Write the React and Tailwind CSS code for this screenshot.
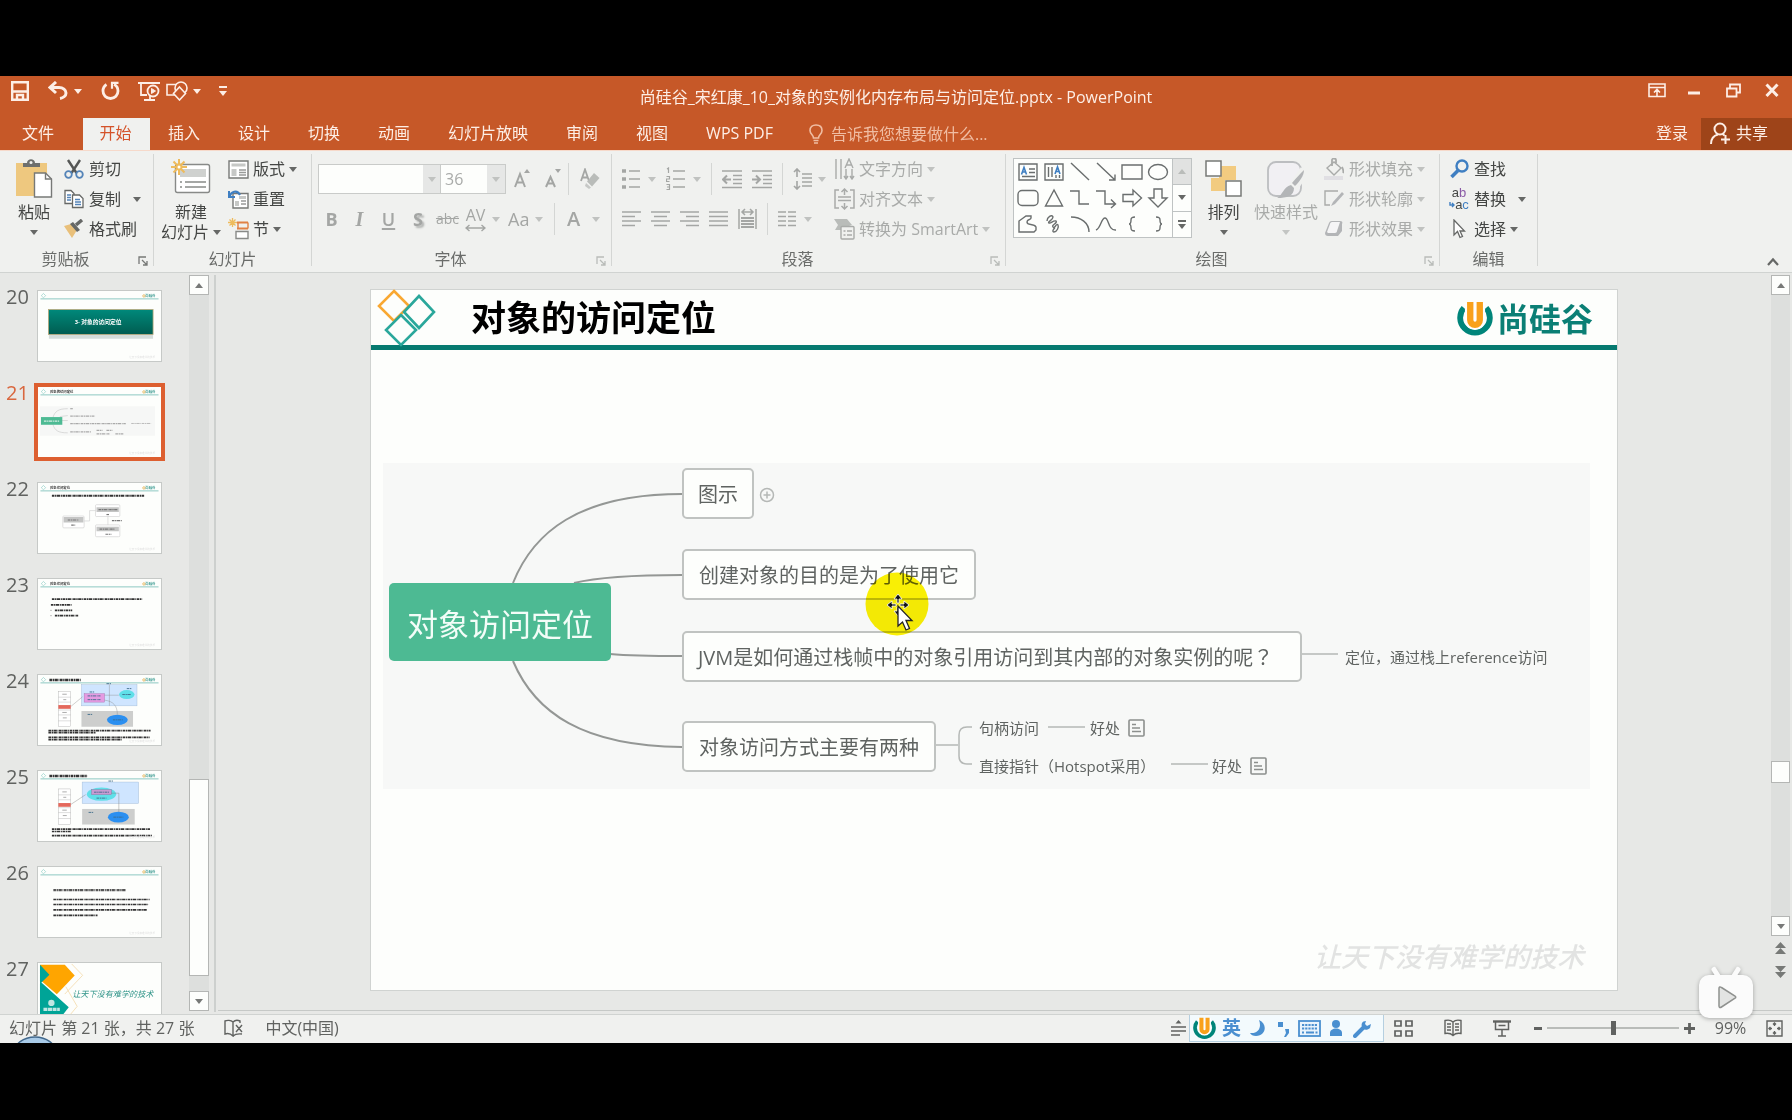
import React from "react";

function Icon({ w, h, children, className = "", sw = 1.4 }) {
  return (
    <svg
      width={w}
      height={h}
      viewBox={`0 0 ${w} ${h}`}
      fill="none"
      stroke="currentColor"
      strokeWidth={sw}
      className={`shrink-0 ${className}`}
      aria-hidden="true"
    >
      {children}
    </svg>
  );
}

function Caret({ className = "" }) {
  return (
    <svg width="8" height="5" viewBox="0 0 8 5" className={`shrink-0 ${className}`} aria-hidden="true">
      <path d="M0 0h8L4 5z" fill="currentColor" />
    </svg>
  );
}

function Sep() {
  return <div className="h-8 w-px bg-[#d4d6d4]" />;
}

/* Full-width punctuation centred in its square */
function Mark({ children }) {
  return <span className="font-['Noto_Sans_CJK_TC',sans-serif]">{children}</span>;
}

/* ---------- title bar ---------- */

function TitleBar() {
  return (
    <header className="grid h-[42px] grid-cols-[1fr_auto_1fr] text-[#fdeee6]">
      <div className="flex items-start pt-[5px] pl-[11px]">
        <button aria-label="保存">
          <Icon w={18} h={20} sw={2.4}>
            <path d="M1.2 1.2h15.6v17.6H1.2zM2 10.5h14" />
            <path d="M6 19v-5h6v5" />
          </Icon>
        </button>
        <button aria-label="撤消" className="ml-[19px] flex items-center gap-[6px]">
          <Icon w={20} h={20} sw={3}>
            <path d="M8 1L2 6.500l6 5.500M3 6.500h8c4 0 7 2.500 7 5.500s-3 5-6 5.500" />
          </Icon>
          <Caret />
        </button>
        <button aria-label="重复" className="ml-[19px]">
          <Icon w={19} h={20} sw={2.8}>
            <path d="M5.500 3.500C3 5 2 7.500 2 10c0 4 3 7.500 7.500 7.500S17 14 17 10c0-3-1.500-5.500-4-6.500" />
            <path d="M17.500 1.800H11v6" strokeWidth="2.200" />
          </Icon>
        </button>
        <button aria-label="从头开始" className="ml-[18px]">
          <Icon w={23} h={20} sw={1.8}>
            <path d="M0 2h22M3 3v11h6M12 15v4M6 19h11" />
            <circle cx="15" cy="10" r="5.500" />
            <path d="M13.500 7.500l4 2.500-4 2.500z" fill="currentColor" strokeWidth="1" />
          </Icon>
        </button>
        <button aria-label="形状" className="ml-[5px] flex items-center gap-[4px]">
          <Icon w={23} h={20} sw={1.6}>
            <path d="M1 3.500h12V14H1z" />
            <circle cx="15" cy="7" r="6" fill="#c65828" />
            <path d="M13.500 6l6 6.500-6 6.500-6-6.500z" fill="#c65828" />
          </Icon>
          <Caret />
        </button>
        <button aria-label="自定义快速访问工具栏" className="ml-[18px] flex h-5 flex-col items-center justify-center gap-[3px]">
          <span className="h-[2px] w-2 bg-[#fdeee6]" />
          <Caret />
        </button>
      </div>
      <h1 className="text-base leading-[42px]">尚硅谷_宋红康_10_对象的实例化内存布局与访问定位.pptx - PowerPoint</h1>
      <div className="flex items-start justify-end pt-[7px] pr-[13px]">
        <button aria-label="功能区显示选项">
          <Icon w={18} h={15} sw={1.6}>
            <path d="M1 1h16v12.500H1zM1 4.500h16M9 13V7M6 9.500l3-3 3 3" />
          </Icon>
        </button>
        <button aria-label="最小化" className="ml-[22px]">
          <Icon w={13} h={15} sw={3}>
            <path d="M0 10h12" />
          </Icon>
        </button>
        <button aria-label="向下还原" className="ml-[25px]">
          <Icon w={15} h={15} sw={1.8}>
            <path d="M1 5.500h9.500v8H1zM4 5V1.500h10v8h-3" />
          </Icon>
        </button>
        <button aria-label="关闭" className="ml-[24px]">
          <Icon w={14} h={15} sw={3}>
            <path d="M1.500 1.500l11 11.500M12.500 1.500l-11 11.500" />
          </Icon>
        </button>
      </div>
    </header>
  );
}

const tabs = ["插入", "设计", "切换", "动画", "幻灯片放映", "审阅", "视图", "WPS PDF"];

function TabRow() {
  return (
    <nav className="flex h-8 items-stretch text-base leading-7 text-[#fdeee6]">
      <button className="w-[83px] pr-[7px] pb-0.5">文件</button>
      <button className="w-[67px] bg-[#f0f1ef] pr-0.5 pb-0.5 text-[#d4532a]">开始</button>
      {tabs.map((t) => (
        <button key={t} className="pr-5 pb-0.5 pl-[18px]">
          {t}
        </button>
      ))}
      <button className="ml-4 flex items-center gap-2 text-[#f0bda3]">
        <Icon w={14} h={20} sw={1.6}>
          <path d="M4.500 14c0-3-3.500-4-3.500-7.500C1 3 3.500 1 7 1s6 2 6 5.500C13 10 9.500 11 9.500 14zM4.500 16.500h5M5 19h4" />
        </Icon>
        告诉我您想要做什么...
      </button>
      <div className="flex-1" />
      <button className="pr-[13px] pb-0.5">登录</button>
      <button className="flex w-[91px] items-center gap-1 bg-[#9e4419] pb-0.5 pl-[9px]">
        <Icon w={22} h={23} sw={2}>
          <circle cx="10" cy="7" r="5.500" />
          <path d="M1 22c0-5 3-8.500 7-9.500M12.500 12l2 1.500M15.500 13v9M11 17.500h9" />
        </Icon>
        共享
      </button>
    </nav>
  );
}

/* ---------- ribbon ---------- */

function Group({ label, launcher, launcherTone = "text-[#b9bcb9]", children }) {
  return (
    <section className="flex">
      <div>
        <div className="flex h-[90px]">{children}</div>
        <div className="flex h-[28px] items-center pt-0.5">
          <div className="flex-1 text-center text-base leading-5 text-[#6a6c6a]">{label}</div>
          {launcher && (
            <button aria-label={`${label}设置`} className={`w-[22px] pt-1 pl-[7px] ${launcherTone}`}>
              <Icon w={10} h={10} sw={1.3}>
                <path d="M1 8V1h7M4 4l5 5M9 5v4H5" />
              </Icon>
            </button>
          )}
        </div>
      </div>
      <div className="mb-1.5 w-px bg-[#d4d6d4]" />
    </section>
  );
}

function Row({ icon, label, caret, far, off }) {
  return (
    <button className={`flex h-[30px] items-center text-base leading-5 whitespace-nowrap ${off ? "text-[#a9aba9]" : "text-[#444644]"}`}>
      <span className="mr-[5px] flex w-5 justify-center">{icon}</span>
      {label}
      {caret && <Caret className={`${far ? "ml-3" : "ml-1"} ${off ? "text-[#c0c2c0]" : "text-[#666866]"}`} />}
    </button>
  );
}

function Big({ icon, line1, line2, caret = true, off, className = "" }) {
  return (
    <button className={`flex flex-col items-center pt-1 text-base leading-5 whitespace-nowrap ${off ? "text-[#a9aba9]" : "text-[#444644]"} ${className}`}>
      <span className="flex h-[44px] items-start">{icon}</span>
      <span>{line1}</span>
      <span className="flex h-5 items-center gap-1">
        {line2}
        {caret && <Caret className={off ? "text-[#c3c5c3]" : "text-[#666866]"} />}
      </span>
    </button>
  );
}

function Sun({ x = 8, y = 8 }) {
  return (
    <g stroke="#eebb5c" strokeWidth="2" transform={`translate(${x} ${y})`}>
      <path d="M0-8v5M0 8v-5M-8 0h5M8 0h-5M-5.500-5.500l3.200 3.200M5.500-5.500L2.300-2.300M-5.500 5.500l3.200-3.200M5.500 5.500L2.300 2.300" />
      <circle r="2.500" fill="#fff" />
    </g>
  );
}

function Clipboard() {
  return (
    <Group label="剪贴板" launcher launcherTone="text-[#777977]">
      <Big
        className="ml-[13px] w-[42px]"
        line1="粘贴"
        icon={
          <Icon w={38} h={42}>
            <path d="M1 5h31v33H1z" fill="#eec87f" stroke="none" />
            <path d="M8 9V5h4c0-5 8-5 8 0h5v4z" fill="#6d6f6d" stroke="none" />
            <circle cx="16" cy="4.500" r="1.500" fill="#f0f1ef" stroke="none" />
            <path d="M19.500 15h11l6 6v18h-17z" fill="#fff" stroke="#777977" />
            <path d="M30.500 15v6h6" stroke="#777977" />
          </Icon>
        }
      />
      <div className="ml-[9px] w-[89px]">
        <Row
          label="剪切"
          icon={
            <Icon w={20} h={20} sw={1.8}>
              <path d="M4 1l8.500 13M16 1L7.500 14" stroke="#555755" strokeWidth="2.400" />
              <circle cx="4.500" cy="15.500" r="3.300" stroke="#5484b8" />
              <circle cx="15.500" cy="15.500" r="3.300" stroke="#5484b8" />
            </Icon>
          }
        />
        <Row
          label="复制"
          caret
          far
          icon={
            <Icon w={20} h={20} sw={1.3}>
              <path d="M1 1.500h6l3 3v10H1z" fill="#fff" stroke="#666866" />
              <path d="M3 6h4M3 8.500h4M3 11h4" stroke="#5484b8" />
              <path d="M8.500 6h7l3.500 3.500v9H8.500z" fill="#fff" stroke="#666866" />
              <path d="M11 10.500h5M11 13h6M11 15.500h6" stroke="#5484b8" />
            </Icon>
          }
        />
        <Row
          label="格式刷"
          icon={
            <Icon w={20} h={20}>
              <path d="M0 7l7-2 6 6-5 8z" fill="#e9c07a" stroke="none" />
              <path d="M6 5l3-2 7 8-3 2z" fill="#666866" stroke="none" />
              <path d="M12 6l6-5" stroke="#666866" strokeWidth="3.500" />
            </Icon>
          }
        />
      </div>
    </Group>
  );
}

function Slides() {
  return (
    <Group label="幻灯片">
      <Big
        className="ml-[7px] w-[60px]"
        line1="新建"
        line2="幻灯片"
        icon={
          <Icon w={40} h={38}>
            <rect x="4.500" y="6.500" width="34" height="28" rx="2" fill="#fff" stroke="#888a88" />
            <path d="M9 11h26v8H9z" fill="#cfd1cf" stroke="none" />
            <path d="M9 24h2M14 24h21M9 29h2M14 29h21" stroke="#888a88" />
            <Sun x={8} y={9} />
          </Icon>
        }
      />
      <div className="ml-[7px] w-[83px]">
        <Row
          label="版式"
          caret
          icon={
            <Icon w={21} h={19}>
              <path d="M1 1h19v17H1z" fill="#fff" stroke="#777977" />
              <path d="M3.500 3.500h14v3h-14zM3.500 9h5v7h-5z" fill="#c6c8c6" stroke="none" />
              <path d="M11 10h7M11 12.500h7M11 15h7" stroke="#999b99" />
            </Icon>
          }
        />
        <Row
          label="重置"
          icon={
            <Icon w={21} h={20}>
              <path d="M5 4.500h15V19H5z" fill="#fff" stroke="#777977" />
              <path d="M11 7h7v3h-7zM7 12h4v5H7z" fill="#c6c8c6" stroke="none" />
              <path d="M13 12h5M13 15h5" stroke="#999b99" />
              <path d="M1 2v6h6M1.500 7.500C3 3 9 0 12 6" stroke="#3f7fc2" strokeWidth="2" />
            </Icon>
          }
        />
        <Row
          label="节"
          caret
          icon={
            <Icon w={21} h={22}>
              <path d="M9 4.500h11M9 10.500h11" stroke="#e08145" strokeWidth="1.800" />
              <path d="M8 13.500h12v7H8z" fill="#fff" stroke="#888a88" />
              <path d="M10 4.500v6M20 4.500v6" stroke="#e08145" />
              <g stroke="#eebb5c" strokeWidth="1.300">
                <path d="M4.500 0v9M0 4.500h9M1.500 1.500l6 6M7.500 1.500l-6 6" />
              </g>
            </Icon>
          }
        />
      </div>
    </Group>
  );
}

const paleCaret = "text-[#c0c2c0]";

function FontGroup() {
  return (
    <Group label="字体" launcher>
      <div className="w-[299px] pt-[10px] pl-1.5 text-[#a4a6a4]">
        <div className="flex h-[30px] items-center">
          <div className="flex h-[30px] w-[123px] border border-[#c9cbc9] bg-[#fdfefc]">
            <input aria-label="字体" className="w-0 flex-1 px-1 outline-none" />
            <button aria-label="字体列表" className="flex w-[17px] items-center justify-center bg-[#e6e7e6]">
              <Caret className={paleCaret} />
            </button>
          </div>
          <div className="flex h-[30px] w-[65px] border border-l-0 border-[#c9cbc9] bg-[#fdfefc]">
            <input aria-label="字号" defaultValue="36" className="w-0 flex-1 px-1 text-base text-[#a9aba9] outline-none" />
            <button aria-label="字号列表" className="flex w-[18px] items-center justify-center bg-[#e6e7e6]">
              <Caret className={paleCaret} />
            </button>
          </div>
          <button aria-label="增大字号" className="flex w-8 justify-center">
            <Icon w={17} h={20} sw={2}>
              <path d="M1 18L6 5l5 13M2.500 13.500h7" />
              <path d="M10 4l3-4 3 4z" fill="currentColor" stroke="none" />
            </Icon>
          </button>
          <button aria-label="减小字号" className="flex w-[30px] justify-center">
            <Icon w={17} h={20} sw={2}>
              <path d="M1 18L5.500 8l4.500 10M2.500 14.500h6" />
              <path d="M10 0l3 4 3-4z" fill="currentColor" stroke="none" />
            </Icon>
          </button>
          <Sep />
          <button aria-label="清除所有格式" className="flex w-10 justify-center pl-0.5">
            <Icon w={20} h={22} sw={1.8}>
              <path d="M1 13L5 1.500 9 13M2.500 9.500h5" />
              <path d="M7 13.500L14 5l5.500 5-7.500 8.500z" fill="#b9bcb9" stroke="none" />
              <path d="M6 15l5 4.500-2 1.500-4-3z" fill="#c6c8c6" stroke="none" />
            </Icon>
          </button>
        </div>
        <div className="mt-[10px] flex h-[30px] items-center text-lg leading-6">
          <button aria-label="加粗" className="w-[27px] font-bold">B</button>
          <button aria-label="倾斜" className="w-[29px] font-['Liberation_Serif',serif] text-xl font-bold italic">I</button>
          <button aria-label="下划线" className="w-[29px] font-semibold underline decoration-2 underline-offset-2">U</button>
          <button aria-label="文字阴影" className="w-[30px] font-bold [text-shadow:2px_2px_2px_#b0b2b0]">S</button>
          <button aria-label="删除线" className="w-[29px] text-sm line-through">abc</button>
          <button aria-label="字符间距" className="ml-[3px] flex w-[43px] items-center gap-1.5">
            <span className="flex flex-col items-center text-base leading-[18px]">
              AV
              <Icon w={21} h={8} sw={1.400}>
                <path d="M1 4h19M4.500 1L1 4l3.500 3M16.500 1L20 4l-3.500 3" />
              </Icon>
            </span>
            <Caret className={paleCaret} />
          </button>
          <button aria-label="更改大小写" className="flex w-[46px] items-center gap-1.5">
            Aa
            <Caret className={paleCaret} />
          </button>
          <Sep />
          <button aria-label="字体颜色" className="flex items-center gap-3 pl-3 text-xl font-semibold">
            A
            <Caret className={paleCaret} />
          </button>
        </div>
      </div>
    </Group>
  );
}

function Lines({ rows, w = 19 }) {
  return (
    <Icon w={w} h={18} sw={1.500}>
      {rows.map(([a, b], i) => (
        <path key={i} d={`M${a} ${2 + i * 4.5}H${b}`} />
      ))}
    </Icon>
  );
}

function Paragraph() {
  return (
    <Group label="段落" launcher>
      <div className="w-[222px] pt-[10px] pl-[10px] text-[#a4a6a4]">
        <div className="flex h-[30px] items-center gap-[10px]">
          <button aria-label="项目符号" className="flex items-center gap-2">
            <Icon w={18} h={22} sw={1.500}>
              <path d="M0 3h4M0 11h4M0 19h4" strokeWidth="3.500" />
              <path d="M7 3h11M7 11h11M7 19h11" />
            </Icon>
            <Caret className={paleCaret} />
          </button>
          <button aria-label="编号" className="flex items-center gap-2">
            <Icon w={19} h={24} sw={1.500}>
              <path d="M7 4h12M7 12h12M7 20h12" />
              <path d="M1 2l1.500-1v5M0.500 9.500h3v2.500h-3v2.500h3M0.500 17.500h3v2.500H1M3.500 20v2.500h-3" strokeWidth="1.200" />
            </Icon>
            <Caret className={paleCaret} />
          </button>
          <Sep />
          <button aria-label="降低列表级别">
            <Icon w={20} h={20} sw={1.600}>
              <path d="M0 2h20M11 6.500h9M11 10.500h9M11 14.500h9M0 18.500h20" />
              <path d="M1 10.500h8M5 6.500l-4 4 4 4" strokeWidth="2" />
            </Icon>
          </button>
          <button aria-label="提高列表级别">
            <Icon w={20} h={20} sw={1.600}>
              <path d="M0 2h20M11 6.500h9M11 10.500h9M11 14.500h9M0 18.500h20" />
              <path d="M0 10.500h8M4 6.500l4 4-4 4" strokeWidth="2" />
            </Icon>
          </button>
          <Sep />
          <button aria-label="行距" className="flex items-center gap-1.5">
            <Icon w={19} h={22} sw={1.600}>
              <path d="M9 6h10M9 10h10M9 14h10M9 18h10" />
              <path d="M4 1v8M1 4l3-3 3 3M4 21v-8M1 18l3 3 3-3" />
            </Icon>
            <Caret className={paleCaret} />
          </button>
        </div>
        <div className="mt-[10px] flex h-[30px] items-center gap-[10px]">
          <button aria-label="左对齐"><Lines rows={[[0, 19], [0, 13], [0, 19], [0, 13]]} /></button>
          <button aria-label="居中"><Lines rows={[[0, 19], [3, 16], [0, 19], [3, 16]]} /></button>
          <button aria-label="右对齐"><Lines rows={[[0, 19], [6, 19], [0, 19], [6, 19]]} /></button>
          <button aria-label="两端对齐"><Lines rows={[[0, 19], [0, 19], [0, 19], [0, 19]]} /></button>
          <button aria-label="分散对齐">
            <Icon w={19} h={22} sw={1.500}>
              <path d="M1 1v20M18 1v20" />
              <path d="M4 4h11M7 1L4 4l3 3M12 1l3 3-3 3" />
              <path d="M3 10h13M3 13h13M3 16h13M3 19h13" strokeWidth="1.800" />
            </Icon>
          </button>
          <Sep />
          <button aria-label="分栏" className="flex items-center gap-2">
            <Icon w={18} h={18} sw={1.500}>
              <path d="M0 2h8M0 6.500h8M0 11h8M0 15.500h8M10 2h8M10 6.500h8M10 11h8M10 15.500h8" />
            </Icon>
            <Caret className={paleCaret} />
          </button>
        </div>
      </div>
      <div className="w-[171px]">
        <Row
          off
          caret
          label="文字方向"
          icon={
            <Icon w={21} h={22} sw={1.400}>
              <path d="M2 1v20M7 1v20M12 11v10M18 11v10M11 10l4-9 4 9M12.500 7h5M10 18l2 3 2-3M16 18l2 3 2-3" />
            </Icon>
          }
        />
        <Row
          off
          caret
          label="对齐文本"
          icon={
            <Icon w={21} h={22} sw={1.500}>
              <path d="M5 2H1v18h4M16 2h4v18h-4M10.500 1v6M7.500 4l3-3 3 3M10.500 21v-6M7.500 18l3 3 3-3M4 9h13M4 12.500h13" />
            </Icon>
          }
        />
        <Row
          off
          caret
          label="转换为 SmartArt"
          icon={
            <Icon w={21} h={22} sw={1.400}>
              <path d="M0 1h13l5 6-3 1H8v4H1l3-5z" fill="#b9bcb9" stroke="none" />
              <rect x="7" y="8.500" width="13" height="12.500" rx="1" fill="#f0f1ef" />
              <path d="M9.500 13h2M13 13h5M9.500 17h2M13 17h5" />
            </Icon>
          }
        />
      </div>
    </Group>
  );
}

const shapes = [
  ["文本框", <><path d="M1 2h18v16H1z" /><path d="M3.500 12.500L6 5.500l2.500 7M4.500 10h3" stroke="#3f7fc2" strokeWidth="1.600" /><path d="M11 7h6M11 10.500h6M4 14.500h13" /></>],
  ["竖排文本框", <><path d="M1 2h18v16H1z" /><path d="M4.500 5v10M8 5v10" /><path d="M11 12l2.500-7 2.500 7M12 9.500h3" stroke="#3f7fc2" strokeWidth="1.600" /><path d="M12 13v3M15.500 13v3" /></>],
  ["直线", <path d="M1 1l18 17" />],
  ["箭头", <path d="M1 1l18 17M19 12.500V18h-6" />],
  ["矩形", <path d="M0 3h20v14H0z" />],
  ["椭圆", <ellipse cx="10" cy="10" rx="9.500" ry="7.500" />],
  ["圆角矩形", <rect x="0" y="2.500" width="20" height="15" rx="4" />],
  ["三角形", <path d="M10 2L1.500 18h17z" />],
  ["肘形连接符", <path d="M0 3h9v13h10" />],
  ["肘形箭头", <path d="M0 3h9v13h10M15 11.500l4.500 4.500-4.500 4" />],
  ["右箭头", <path d="M1 6.500h10V2l8.500 8-8.500 8v-4.500H1z" />],
  ["下箭头", <path d="M6 1v9H1l9 9 9-9h-5V1z" />],
  ["任意多边形", <path d="M1 18V7l7-5h5v2c0 2-4 1-4 4 0 4 7 1 9 5v3l-2 2z" />],
  ["自由曲线", <path d="M3 7c0-4 5-7 6-4 0 3-6 5-4 6s4-3 7-2c2 2-5 4-3 6s3-4 5-2c1 2-1 7-4 7-2 0-1-3 1-4" />],
  ["弧形", <path d="M1 3c10 0 18 6 18 15" />],
  ["曲线", <path d="M0 16c5-2 5-12 9-12s3 13 11 12" />],
  ["左大括号", <path d="M13 3c-3 0-4 .500-4 3 0 2.500 0 4-2 4 2 0 2 1.500 2 4 0 2.500 1 3 4 3" />],
  ["右大括号", <path d="M8 3c3 0 4 .500 4 3 0 2.500 0 4 2 4-2 0-2 1.500-2 4 0 2.500-1 3-4 3" />],
];

function Drawing() {
  return (
    <Group label="绘图" launcher>
      <div className="mt-1 ml-[7px] flex h-20 border border-[#bfc3c3]">
        <div className="grid grid-cols-6 bg-[#fdfefc] px-px text-[#6a6e6e]">
          {shapes.map(([name, d]) => (
            <button key={name} aria-label={name} className="flex h-[26px] w-[26px] items-center justify-center">
              <Icon w={20} h={20} sw={1.400} className="overflow-visible">
                {d}
              </Icon>
            </button>
          ))}
        </div>
        <div className="flex w-[19px] flex-col border-l border-[#bfc3c3] text-[#666866]">
          <button aria-label="上一行" className="flex flex-1 items-center justify-center bg-[#e1e2e1] text-[#b9bcb9]">
            <Caret className="rotate-180" />
          </button>
          <button aria-label="下一行" className="flex flex-1 items-center justify-center border-y border-[#bfc3c3] bg-[#fdfefc]">
            <Caret />
          </button>
          <button aria-label="其他形状" className="flex flex-1 flex-col items-center justify-center gap-0.5 bg-[#fdfefc]">
            <span className="h-[2px] w-2 bg-[#666866]" />
            <Caret />
          </button>
        </div>
      </div>
      <Big
        className="w-[63px]"
        line1="排列"
        icon={
          <Icon w={37} h={40} sw={1.500}>
            <path d="M14 8h17v14H14zM6 20h14v13H6z" fill="#f2cb80" stroke="none" />
            <path d="M1 3h15v15H1zM21 23h15v15H21z" fill="#fff" stroke="#777977" />
          </Icon>
        }
      />
      <Big
        className="w-[62px]"
        off
        line1="快速样式"
        icon={
          <Icon w={40} h={42} sw={1.800}>
            <rect x="2" y="4" width="33" height="34" rx="8" fill="#f1f0f3" stroke="#bcbec0" />
            <path d="M39 12L27 30" stroke="#f0f1ef" strokeWidth="10" />
            <path d="M38 12c0 6-5 12-9 16l-3-3c4-5 8-9 12-13z" fill="#b3b5b7" stroke="none" />
            <path d="M25 27l3 3c0 8-7 10-17 10 6-3 6-11 14-13z" fill="#b3b5b7" stroke="none" />
          </Icon>
        }
      />
      <div className="ml-[7px] w-[115px]">
        <Row
          off
          caret
          label="形状填充"
          icon={
            <Icon w={20} h={22} sw={1.400}>
              <path d="M3 10l7-6 7 6-7 7z" />
              <path d="M8 8V2c0-2 4-2 4 0v3M18 9c1 2 2 4 1 6" strokeWidth="1.800" />
              <path d="M0 18h19v4H0z" fill="#e0dfe3" stroke="none" />
            </Icon>
          }
        />
        <Row
          off
          caret
          label="形状轮廓"
          icon={
            <Icon w={20} h={20} sw={1.400}>
              <path d="M14 2H1v14h5" />
              <path d="M18 3l-9 10-2 4 4-2 9-10z" fill="#b3b5b7" stroke="none" />
            </Icon>
          }
        />
        <Row
          off
          caret
          label="形状效果"
          icon={
            <Icon w={20} h={20} sw={1.400}>
              <path d="M1 14l4-10c1-2 2-2 4-2h7c2 0 3 1 2 3v7l-4 5H4c-2 0-3-1-3-3z" fill="#b3b5b7" stroke="none" />
              <path d="M3 13l3-8c0-1 1-2 2-2h8l-3 9c0 1-1 2-2 2H4z" fill="#f5f5f6" stroke="none" />
            </Icon>
          }
        />
      </div>
    </Group>
  );
}

function Editing() {
  return (
    <Group label="编辑">
      <div className="w-[97px] pl-[9px]">
        <Row
          label="查找"
          icon={
            <Icon w={19} h={20} sw={2.400}>
              <circle cx="12" cy="7" r="5.500" stroke="#3f7fc2" />
              <path d="M8 11.500L1.500 18" stroke="#3f7fc2" strokeWidth="3.500" />
            </Icon>
          }
        />
        <Row
          label="替换"
          caret
          far
          icon={
            <span className="flex flex-col font-['Liberation_Sans',sans-serif] text-[13px] leading-3">
              <span>
                a<span className="text-[#8a5ba6]">b</span>
              </span>
              <span className="flex items-center">
                <Icon w={6} h={6} sw={1.400}>
                  <path d="M1 0v3h4M3 1l2 2-2 2" stroke="#3f7fc2" />
                </Icon>
                a<span className="text-[#3f7fc2]">c</span>
              </span>
            </span>
          }
        />
        <Row
          label="选择"
          caret
          icon={
            <Icon w={14} h={20} sw={1.300}>
              <path d="M2 1v15l3.500-3.500L8 18.500l2.500-1L8 12h4.500z" fill="#fff" stroke="#666866" />
            </Icon>
          }
        />
      </div>
    </Group>
  );
}

function Ribbon() {
  return (
    <div className="flex border-b border-[#d0d3d1] bg-[#f0f1ef] pt-1 shadow-[inset_0_1px_0_#f6d9ca]">
      <Clipboard />
      <Slides />
      <FontGroup />
      <Paragraph />
      <Drawing />
      <Editing />
      <div className="flex flex-1 items-end justify-end pr-[13px] pb-[5px] text-[#666866]">
        <button aria-label="折叠功能区">
          <Icon w={12} h={10} sw={2.200}>
            <path d="M1 8l5-5.500L11 8" />
          </Icon>
        </button>
      </div>
    </div>
  );
}

/* ---------- thumbnails ---------- */

function ThumbFrame({ title, children }) {
  return (
    <>
      <path d="M55 25l22 22-22 22-22-22z" fill="none" stroke="#7fc7bf" strokeWidth="6" />
      {title && (
        <text x="120" y="62" fontSize="34" fontWeight="700" fill="#333">
          {title}
        </text>
      )}
      <text x="1082" y="62" fontSize="34" fontWeight="700" fill="#3f9c93">
        尚硅谷
      </text>
      <circle cx="1068" cy="50" r="12" fill="none" stroke="#e5b04f" strokeWidth="8" />
      <path d="M25 80h1190" stroke="#8cc7c1" strokeWidth="10" />
      {children}
      <text x="920" y="675" fontSize="26" fill="#e2e2e2">
        让天下没有难学的技术
      </text>
    </>
  );
}

/* Rows of body copy too small to read, drawn as broken strokes */
function Copy({ rows, color = "#333", w = 13 }) {
  return rows.map(([x, y, len], i) => (
    <path key={i} d={`M${x} ${y}h${len}`} stroke={color} strokeWidth={w} strokeDasharray="26 6 14 5 34 7 9 6" />
  ));
}

function Stack({ y, red }) {
  return (
    <g stroke="#aaa" strokeWidth="4" fill="#fff">
      <rect x="205" y={y} width="125" height="360" />
      {[60, 110, 190, 240, 300].map((d) => (
        <path key={d} d={`M205 ${y + d}h125`} />
      ))}
      <rect x="205" y={red} width="125" height="38" fill="#e4685c" stroke="none" />
      <path d={`M245 ${y + 30}h45M255 ${y + 85}h30M245 ${y + 215}h45M250 ${y + 270}h40`} stroke="#888" strokeWidth="7" />
    </g>
  );
}

const thumbs = [
  {
    n: 20,
    art: (
      <ThumbFrame>
        <defs>
          <linearGradient id="banner" x1="0" y1="0" x2="0" y2="1">
            <stop offset="0" stopColor="#00897b" />
            <stop offset="1" stopColor="#005c50" />
          </linearGradient>
        </defs>
        <path d="M110 445h1050v40H110z" fill="#d5dcda" />
        <rect x="105" y="188" width="1055" height="252" fill="url(#banner)" stroke="#b9a878" strokeWidth="8" />
        <text x="370" y="330" fontSize="58" fontWeight="700" fill="#fff">
          3- 对象的访问定位
        </text>
      </ThumbFrame>
    ),
  },
  {
    n: 21,
    art: (
      <ThumbFrame title="对象的访问定位">
        <path d="M20 195h1160v300H20z" fill="#f6f7f6" />
        <path d="M150 310C170 250 200 220 300 220M150 380C170 440 200 465 300 465M240 340h60M220 300l80-10" fill="none" stroke="#bbb" strokeWidth="5" />
        <rect x="30" y="305" width="215" height="78" fill="#4dba93" />
        <Copy color="#d5ede4" w={14} rows={[[60, 346, 155]]} />
        <Copy color="#aaa" w={12} rows={[[325, 220, 30], [325, 295, 250], [325, 372, 560], [325, 455, 210], [590, 440, 60], [690, 440, 60], [590, 475, 130], [780, 475, 80]]} />
        <Copy color="#bbb" w={10} rows={[[940, 370, 200]]} />
      </ThumbFrame>
    ),
  },
  {
    n: 22,
    art: (
      <ThumbFrame title="对象访问定位">
        <Copy w={20} rows={[[140, 130, 930]]} />
        <g fill="#fff" stroke="#ccc" strokeWidth="6">
          <rect x="250" y="335" width="215" height="120" rx="10" />
          <rect x="580" y="220" width="245" height="120" rx="10" />
          <rect x="580" y="425" width="245" height="120" rx="10" />
          <path d="M465 385h55V280h60M705 340v85" fill="none" />
        </g>
        <path d="M258 345h200v55H258zM590 245h225v50H590zM590 445h225v45H590z" fill="#c4c5c4" />
        <Copy color="#777" w={12} rows={[[300, 375, 110], [610, 270, 190], [620, 467, 150], [335, 428, 40], [690, 320, 30], [680, 520, 60], [745, 382, 100]]} />
      </ThumbFrame>
    ),
  },
  {
    n: 23,
    art: (
      <ThumbFrame title="对象访问定位">
        <Copy w={18} rows={[[140, 205, 910], [130, 262, 210], [170, 318, 175], [170, 372, 235]]} />
        <path d="M125 318h12M125 372h12" stroke="#999" strokeWidth="10" />
      </ThumbFrame>
    ),
  },
  {
    n: 24,
    art: (
      <ThumbFrame>
        <Copy w={26} rows={[[115, 50, 320]]} />
        <Stack y={165} red={305} />
        <rect x="438" y="98" width="560" height="215" fill="#cfe5ff" stroke="#9bb4d0" strokeWidth="4" />
        <rect x="438" y="365" width="520" height="160" fill="#cdcecd" />
        <rect x="465" y="190" width="205" height="85" fill="#e59be2" stroke="#a867a6" strokeWidth="4" />
        <ellipse cx="895" cy="198" rx="78" ry="45" fill="#5fdfe8" />
        <ellipse cx="800" cy="455" rx="105" ry="52" fill="#2b8ff0" />
        <path d="M330 320l120-100M670 205h145M670 255c90 10 130 60 130 145M720 98v215" fill="none" stroke="#888" strokeWidth="4" />
        <Copy color="#3d6b8a" w={9} rows={[[500, 212, 130], [500, 250, 130], [850, 198, 90], [755, 455, 100], [690, 88, 50], [895, 138, 50], [500, 400, 50], [520, 172, 50]]} />
        <Copy w={17} rows={[[105, 565, 1030], [105, 585, 480], [105, 632, 1020], [105, 655, 740]]} />
      </ThumbFrame>
    ),
  },
  {
    n: 25,
    art: (
      <ThumbFrame>
        <Copy w={26} rows={[[115, 50, 380]]} />
        <Stack y={182} red={325} />
        <rect x="445" y="112" width="570" height="218" fill="#cfe5ff" stroke="#9bb4d0" strokeWidth="4" />
        <rect x="445" y="385" width="530" height="158" fill="#cdcecd" />
        <ellipse cx="640" cy="235" rx="148" ry="68" fill="#5fdfe8" />
        <rect x="540" y="190" width="200" height="50" fill="#c99ad2" stroke="#8c6a98" strokeWidth="4" />
        <ellipse cx="810" cy="468" rx="105" ry="55" fill="#2b8ff0" />
        <path d="M330 340l150-100M740 225h75v190" fill="none" stroke="#777" strokeWidth="4" />
        <Copy color="#3d6b8a" w={9} rows={[[565, 215, 150], [590, 275, 100], [760, 468, 100], [710, 102, 50], [510, 420, 50]]} />
        <Copy w={17} rows={[[140, 590, 990], [140, 614, 190], [140, 655, 1010]]} />
      </ThumbFrame>
    ),
  },
  {
    n: 26,
    art: (
      <ThumbFrame>
        <Copy color="#555" w={24} rows={[[155, 235, 730]]} />
        <Copy w={17} rows={[[155, 330, 970], [155, 380, 955], [155, 435, 945], [155, 490, 445]]} />
      </ThumbFrame>
    ),
  },
  {
    n: 27,
    art: (
      <>
        <path d="M340 10l110 115-180 190M280 240l115 200-100 120" fill="none" stroke="#f3d9a8" strokeWidth="8" />
        <path d="M20 18h250l100 110-180 190L20 170z" fill="#ffa500" />
        <path d="M20 18l95 100-95 95zM20 185l290 265-190 240H20z" fill="#00a497" />
        <circle cx="135" cy="405" r="32" fill="#bfe6e2" />
        <path d="M55 470h165" stroke="#bfe6e2" strokeWidth="34" strokeDasharray="40 6" />
        <text x="345" y="345" fontSize="82" fontStyle="italic" fill="#2f9488">
          让天下没有难学的技术
        </text>
      </>
    ),
  },
];

function ScrollBtn({ label, down }) {
  return (
    <button aria-label={label} className="flex h-5 w-full shrink-0 items-center justify-center border border-[#b4b6b4] bg-[#fdfefc] text-[#777977]">
      <Caret className={down ? "" : "rotate-180"} />
    </button>
  );
}

function ThumbPane() {
  return (
    <aside className="flex w-[216px] shrink-0">
      <ol className="min-w-0 flex-1 overflow-hidden pt-[13px]">
        {thumbs.map(({ n, art }) => (
          <li key={n} className="h-24 pl-1.5">
            <button className="flex items-start">
              <span className={`w-[31px] text-left text-xl leading-[22px] ${n === 21 ? "text-[#d9673f]" : "text-[#606260]"}`}>{n}</span>
              <span
                className={`mt-1 block h-[72px] w-[125px] border bg-[#fdfefc] ${n === 21 ? "border-[#dd5f30] ring-3 ring-[#dd5f30]" : "border-[#c6c9c7]"}`}
              >
                <svg viewBox="0 0 1240 710" preserveAspectRatio="none" className="block h-full w-full" aria-hidden="true">
                  {art}
                </svg>
              </span>
            </button>
          </li>
        ))}
      </ol>
      <div className="mt-0.5 mr-[5px] mb-[3px] flex w-5 flex-col bg-[#dddfdd]">
        <ScrollBtn label="向上滚动" />
        <div className="flex-[486]" />
        <div className="flex-[196] border border-[#b4b6b4] bg-[#fdfefc]" />
        <div className="flex-[15]" />
        <ScrollBtn label="向下滚动" down />
      </div>
      <div className="mt-0.5 mb-0.5 w-0.5 bg-[#cdd0ce]" />
    </aside>
  );
}

/* ---------- slide ---------- */

function ULogo({ size }) {
  return (
    <svg width={size} height={size} viewBox="0 0 34 34" className="shrink-0" aria-hidden="true">
      <path d="M6.500 6.500A14 14 0 1 0 27.500 6.500" fill="none" stroke="#00857a" strokeWidth="5.500" />
      <path d="M12 2v16a5 5 0 0 0 10 0V2" fill="none" stroke="#fff" strokeWidth="9" />
      <path d="M12.500 1v17a4.500 4.500 0 0 0 9 0V1" fill="none" stroke="#f9a11b" strokeWidth="6" />
    </svg>
  );
}

function NoteIcon() {
  return (
    <Icon w={17} h={18} sw={1.600} className="text-[#8c8f8d]">
      <rect x="1" y="1" width="15" height="16" rx="1" />
      <path d="M4 5.500h4M4 9h8M4 12.500h9" />
    </Icon>
  );
}

const nodeBox = "absolute left-[299px] flex h-[51px] items-center rounded-[5px] border-2 border-[#c0c3c1] bg-[#fdfefc] text-xl leading-6 whitespace-nowrap text-[#5f6361]";
const leaf = "absolute flex h-6 items-center text-[15px] leading-6 whitespace-nowrap text-[#5f6361]";

function MindMap() {
  return (
    <div className="relative mt-[113px] mr-[27px] ml-[12px] h-[326px] bg-[#f7f8f7]">
      <svg width="1206" height="326" viewBox="0 0 1206 326" fill="none" stroke="#949795" strokeWidth="2" className="absolute top-0 left-0" aria-hidden="true">
        <path d="M130 120C150 70 195 31 299 31M191 120C220 113 260 112 299 112M227 191C250 193 270 193 299 193M130 198C152 250 200 283 299 284" />
        <g stroke="#b5b8b6" strokeWidth="1.500">
          <path d="M553 282h22M589 264h-5q-8 0-8 8v21q0 8 8 8h5M919 191h36M665 264h37M788 301h37" />
          <circle cx="384" cy="32" r="6.500" />
          <path d="M380.500 32h7M384 28.500v7" />
        </g>
      </svg>
      <div className="absolute top-[120px] left-[6px] flex h-[78px] w-[222px] items-center justify-center rounded-[5px] bg-[#4dba93] pt-1 text-[31px] leading-10 whitespace-nowrap text-[#f3fdf8]">
        对象访问定位
      </div>
      <div className={`${nodeBox} top-[5px] w-[72px] justify-center pt-0.5`}>图示</div>
      <div className={`${nodeBox} top-[86px] w-[294px] justify-center pt-0.5`}>创建对象的目的是为了使用它</div>
      <div className={`${nodeBox} top-[168px] w-[620px] pt-0.5 pl-[14px]`}>
        <span>
          JVM是如何通过栈帧中的对象引用访问到其内部的对象实例的呢<Mark>？</Mark>
        </span>
      </div>
      <div className={`${nodeBox} top-[258px] w-[254px] justify-center pt-0.5`}>对象访问方式主要有两种</div>
      <div className={`${leaf} top-[182px] left-[962px]`}>定位，通过栈上reference访问</div>
      <div className={`${leaf} top-[253px] left-[596px]`}>句柄访问</div>
      <div className={`${leaf} top-[253px] left-[707px] gap-2`}>
        好处
        <NoteIcon />
      </div>
      <div className={`${leaf} top-[291px] left-[596px]`}>直接指针（Hotspot采用）</div>
      <div className={`${leaf} top-[291px] left-[829px] gap-2`}>
        好处
        <NoteIcon />
      </div>
      <svg width="64" height="66" viewBox="0 0 64 66" className="absolute top-[108px] left-[482px] mix-blend-multiply" aria-hidden="true">
        <circle cx="32" cy="33" r="31.500" fill="#fbf005" />
      </svg>
      <svg width="32" height="40" viewBox="0 0 32 40" className="absolute top-[130px] left-[502px]" aria-hidden="true">
        <path d="M13 1l4 5h-3v4h-2V6H9zM2 12l5-4v3h4v2H7v3zM24 12l-5-4v3h-4v2h4v3zM13 23l-4-5h3v-4h2v4h3z" fill="#111" stroke="#fff" strokeWidth="0.800" />
        <path d="M13 13v20l4.500-4 3.500 8 3.500-1.500-3.500-8h6z" fill="#fff" stroke="#222" strokeWidth="1.300" />
      </svg>
    </div>
  );
}

function Slide() {
  return (
    <div className="mr-[153px] ml-[154px] mt-4 flex aspect-video flex-col border border-[#d0d3d1] bg-[#fdfefc]">
      <div className="flex h-[60px] items-start border-b-[5px] border-[#067a70]">
        <svg width="60" height="56" viewBox="0 0 60 56" className="ml-1.5 shrink-0 overflow-visible" fill="none" strokeWidth="2.600" aria-hidden="true">
          <path d="M17 1L32 16 17 31 2 16z" stroke="#f9a832" />
          <path d="M42 6L57 22 42 38 27 22z" stroke="#2aa79b" fill="#fdfefc" />
          <path d="M24 25L39 40 24 55 9 40z" stroke="#2aa79b" fill="#fdfefc" />
        </svg>
        <h2 className="ml-[34px] text-[35px] leading-[56px] font-bold text-black">对象的访问定位</h2>
        <div className="flex-1" />
        <div className="mr-6 flex items-center gap-1 pt-[11px]">
          <ULogo size={36} />
          <span className="text-[32px] leading-8 font-bold text-[#0b7f75]">尚硅谷</span>
        </div>
      </div>
      <MindMap />
      <div className="mt-auto mr-[33px] mb-4 self-end font-['Noto_Sans_CJK_SC',sans-serif] text-[27px] leading-9 font-medium text-[#e2e3e2] italic">
        让天下没有难学的技术
      </div>
    </div>
  );
}

function Workspace() {
  return (
    <main className="flex min-h-0 flex-1 border-b border-[#d0d3d1] bg-[#e7e8e6]">
      <ThumbPane />
      <div className="mb-[3px] ml-0.5 flex min-w-0 flex-1 border-b border-[#c6c9c7]">
        <div className="-ml-0.5 min-w-0 flex-1">
          <Slide />
        </div>
        <div className="mt-0.5 mr-0.5 flex w-[19px] flex-col">
          <div className="flex flex-1 flex-col bg-[#dddfdd]">
            <ScrollBtn label="向上滚动" />
            <div className="flex-[468]" />
            <div className="h-[22px] border border-[#b4b6b4] bg-[#fdfefc]" />
            <div className="flex-[133]" />
            <ScrollBtn label="向下滚动" down />
          </div>
          <div className="flex h-[74px] flex-col items-center gap-3 pt-1.5 text-[#777977]">
            <button aria-label="上一张幻灯片">
              <Icon w={11} h={12}>
                <path d="M5.500 0L11 6H0zM5.500 6l5.500 6H0z" fill="currentColor" stroke="none" />
              </Icon>
            </button>
            <button aria-label="下一张幻灯片">
              <Icon w={11} h={12}>
                <path d="M5.500 12L11 6H0zM5.500 6L11 0H0z" fill="currentColor" stroke="none" />
              </Icon>
            </button>
          </div>
        </div>
      </div>
    </main>
  );
}

/* ---------- status bar ---------- */

function ImeBar() {
  return (
    <div className="ml-[3px] flex h-7 w-[195px] items-center border border-[#b5cfe0] bg-[#f3fafd] pl-[3px] text-[#4a8fd0]">
      <ULogo size={23} />
      <button className="ml-1.5 text-[19px] leading-6 font-bold">英</button>
      <button aria-label="半角" className="ml-2">
        <Icon w={18} h={18}>
          <path d="M10 1c9 4 7 16-3 16-3 0-5-1-6-3 8 1 12-5 9-13z" fill="currentColor" stroke="none" />
        </Icon>
      </button>
      <button aria-label="中英文标点" className="ml-[11px]">
        <Icon w={12} h={18}>
          <rect x="0" y="3" width="5" height="5" fill="currentColor" stroke="none" />
          <path d="M7 10h4v4l-3 4H6l2-4z" fill="currentColor" stroke="none" />
        </Icon>
      </button>
      <button aria-label="软键盘" className="ml-[8px]">
        <Icon w={23} h={17} sw={1.800}>
          <rect x="1" y="1" width="21" height="15" fill="#e8f3fc" />
          <path d="M4 5h15M4 8.500h15" strokeDasharray="2.200 1" strokeWidth="2" />
          <path d="M4 12.500h2M8 12.500h8M17.500 12.500h2" strokeWidth="2" />
        </Icon>
      </button>
      <button aria-label="用户" className="ml-[8px]">
        <Icon w={14} h={18}>
          <circle cx="7" cy="5" r="4" fill="currentColor" stroke="none" />
          <path d="M1 17v-3c0-6 12-6 12 0v3z" fill="currentColor" stroke="none" />
        </Icon>
      </button>
      <button aria-label="工具" className="ml-[10px]">
        <Icon w={19} h={19} sw={4}>
          <path d="M2 17l8-8" strokeLinecap="round" />
          <path d="M13 2c-4 0-5 3-4 6s5 4 8 1l1-4-4 2-2-2z" fill="currentColor" stroke="none" />
        </Icon>
      </button>
    </div>
  );
}

function StatusBar() {
  return (
    <footer className="relative flex h-7 shrink-0 items-center overflow-hidden bg-[#f0f1ef] pb-0.5 text-base leading-6 whitespace-nowrap text-[#606260]">
      <span className="pl-[9px]">幻灯片 第 21 张，共 27 张</span>
      <button aria-label="拼写检查" className="ml-[30px]">
        <Icon w={20} h={18} sw={1.400}>
          <path d="M9 3c-2-2-6-2-8-1v13c3-1 6 0 8 2V3c2-2 5-2 7-1v2M9 17c2-2 4-2.500 9-2M12 6l6 7M18 6l-6 7" />
        </Icon>
      </button>
      <button className="ml-[21px]">中文(中国)</button>
      <div className="flex-1" />
      <button aria-label="备注">
        <Icon w={15} h={18} sw={1.600}>
          <path d="M7.500 1l3 3.500h-6z" fill="currentColor" stroke="none" />
          <path d="M0 8h15M0 12h15M0 16h9" />
        </Icon>
      </button>
      <ImeBar />
      <button aria-label="幻灯片浏览" className="ml-[10px]">
        <Icon w={19} h={17} sw={1.700}>
          <path d="M1 1h6v5H1zM12 1h6v5h-6zM1 11h6v5H1zM12 11h6v5h-6z" />
        </Icon>
      </button>
      <button aria-label="阅读视图" className="ml-[31px]">
        <Icon w={18} h={18} sw={1.400}>
          <path d="M9 3C7 1 3 1 1 1.500v13c3-.500 6 0 8 2 2-2 5-2.500 8-2v-13C15 1 11 1 9 3zM9 3v14" />
          <path d="M3 5h4M3 8h4M3 11h4M11 5h4M11 8h4M11 11h4" />
        </Icon>
      </button>
      <button aria-label="幻灯片放映" className="ml-[31px]">
        <Icon w={18} h={17} sw={1.500}>
          <path d="M0 1.500h18" strokeWidth="2.400" />
          <path d="M2.500 2v7.500h13V2M5.500 5.500h7M9 10v6M5 16h8" />
        </Icon>
      </button>
      <button aria-label="缩小" className="ml-[23px] h-[3px] w-[8px] bg-[#606260]" />
      <input
        type="range"
        aria-label="显示比例"
        min="0"
        max="100"
        defaultValue="50"
        className="mx-[5px] h-4 w-[132px] appearance-none bg-[linear-gradient(#b9bcb9,#b9bcb9)] bg-[length:100%_2px] bg-center bg-no-repeat [&::-webkit-slider-thumb]:h-[14px] [&::-webkit-slider-thumb]:w-[5px] [&::-webkit-slider-thumb]:appearance-none [&::-webkit-slider-thumb]:bg-[#606260]"
      />
      <button aria-label="放大">
        <Icon w={11} h={11} sw={2.800}>
          <path d="M0 5.500h11M5.500 0v11" />
        </Icon>
      </button>
      <button className="ml-[19px] w-[33px]">99%</button>
      <button aria-label="适应窗口" className="mr-[9px] ml-[19px]">
        <Icon w={17} h={17} sw={1.400}>
          <path d="M1 1h15v15H1z" />
          <path d="M8.500 3v3M8.500 11v3M3 8.500h3M11 8.500h3M7 4.500L8.500 3 10 4.500M7 12.500l1.500 1.500 1.500-1.500M4.500 7L3 8.500 4.500 10M12.500 7L14 8.500 12.500 10" />
        </Icon>
      </button>
      <svg width="36" height="7" viewBox="0 0 36 7" className="absolute bottom-0 left-[17px]" aria-hidden="true">
        <ellipse cx="18" cy="17" rx="21" ry="16" fill="#a9cbe8" stroke="#41688c" strokeWidth="1.500" />
      </svg>
    </footer>
  );
}

function PlayerBadge() {
  return (
    <button aria-label="播放" className="absolute right-[38px] bottom-[23px] drop-shadow-[0_1px_2px_rgba(0,0,0,0.3)]">
      <svg width="56" height="54" viewBox="0 0 56 54" aria-hidden="true">
        <path d="M16 3.500l5 8M40 3.500l-5 8" stroke="#fbfbfb" strokeWidth="5" strokeLinecap="round" />
        <rect x="1" y="9" width="54" height="43" rx="10" fill="#fbfbfb" />
        <path d="M21 22.500c0-1.500 1-2 2.500-1l13.500 8.500c1 .800 1 1.500 0 2.200L23.500 41c-1.500 1-2.500.500-2.500-1z" fill="#e3e4e3" stroke="#8f918f" strokeWidth="1.500" />
      </svg>
    </button>
  );
}

export default function App() {
  return (
    <div className="flex h-screen flex-col bg-black pt-[76px] pb-[77px] font-['Open_Sans','Noto_Sans_CJK_SC',sans-serif]">
      <div className="relative flex min-h-0 flex-1 flex-col bg-[#c65828]">
        <TitleBar />
        <TabRow />
        <Ribbon />
        <Workspace />
        <StatusBar />
        <PlayerBadge />
      </div>
    </div>
  );
}
